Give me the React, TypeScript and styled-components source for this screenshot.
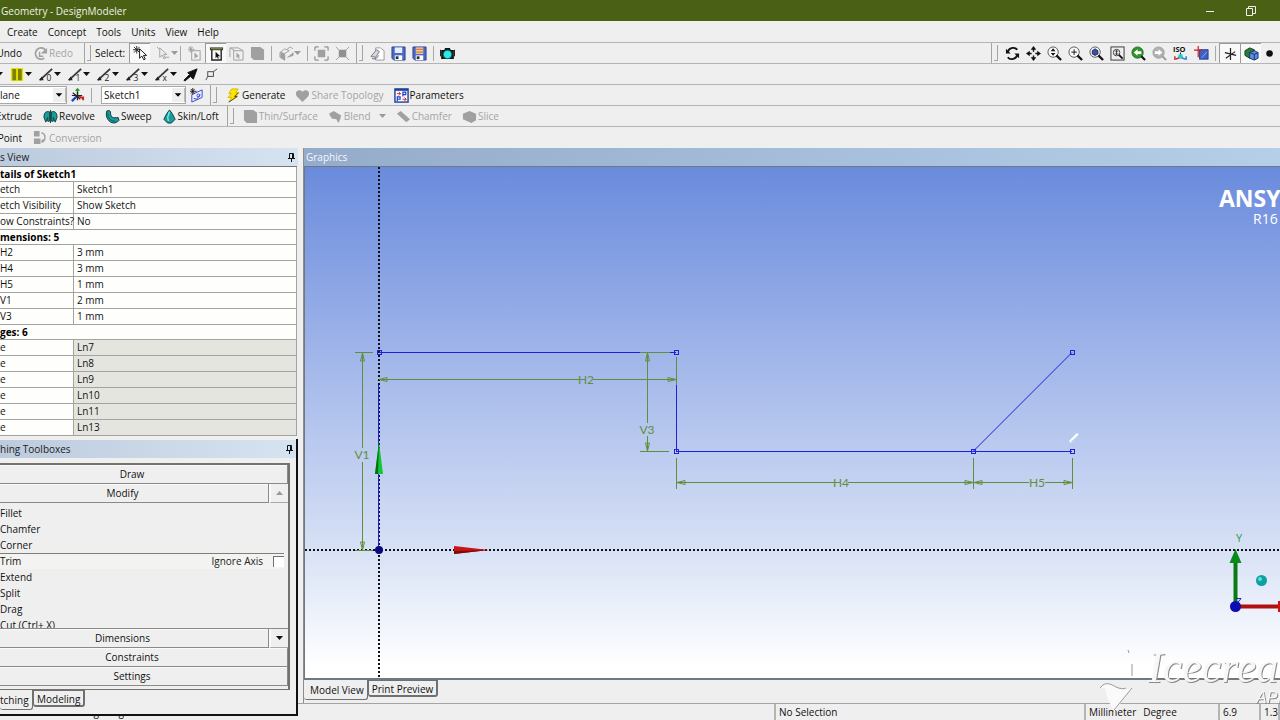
import React from "react";
import styled, { createGlobalStyle, css } from "styled-components";

const GlobalStyle = createGlobalStyle`
  * { box-sizing: border-box; }
  body { margin: 0; background: #efefef; overflow: hidden; }
  button, select, input { font: inherit; color: inherit; margin: 0; padding: 0; border: 0; background: none; border-radius: 0; }
`;

const Window = styled.div`
  min-height: 100vh;
  display: flex;
  flex-direction: column;
  overflow: hidden;
  background: #efefef;
  color: #111;
  font: 10px/16px "Open Sans", "Noto Sans", sans-serif;
  white-space: nowrap;
`;

/* ---------- title bar and menu ---------- */
const TitleBar = styled.header`
  height: 21px;
  display: flex;
  align-items: center;
  background: #4a6015;
  color: #eef0e4;
`;
const Title = styled.h1`
  flex: 1;
  margin: 0;
  padding-left: 1px;
  font-size: 10px;
  font-weight: 400;
`;
const CaptionButton = styled.button`
  width: 41px;
  height: 21px;
  display: grid;
  place-items: center;
`;
const MenuBar = styled.nav`
  height: 22px;
  padding-left: 2px;
  display: flex;
  align-items: center;
  border-bottom: 1px solid #b4b4b4;
`;
const MenuItem = styled.button`
  height: 20px;
  padding: 0 5px;
`;

/* ---------- tool bars ---------- */
const Bar = styled.div<{ $plain?: boolean }>`
  height: 21px;
  display: flex;
  align-items: center;
  ${(p) => !p.$plain && css`border-bottom: 1px solid #b4b4b4;`}
`;
const Spring = styled.div`
  flex: 1;
`;
const Separator = styled.i`
  width: 1px;
  height: 15px;
  margin: 0 3px;
  background: #a8a8a8;
`;
const Grip = styled.i`
  width: 7px;
  height: 20px;
  margin: 0 4px 0 3px;
  flex: none;
  border-left: 1px solid #a4a4a4;
  display: flex;
  justify-content: flex-end;
  align-items: center;
  &::after {
    content: "";
    width: 3px;
    height: 15px;
    border: solid #a4a4a4;
    border-width: 0 1px 1px 0;
  }
`;
const Tool = styled.button<{ $wide?: boolean; $slim?: boolean; $on?: boolean }>`
  flex: none;
  width: ${(p) => (p.$wide ? 29 : p.$slim ? 19 : 21)}px;
  height: 20px;
  display: flex;
  align-items: center;
  justify-content: center;
  ${(p) => p.$on && css`
    background: #f9f9f9;
    border: solid #9a9a9a;
    border-width: 1px 0 0 1px;
  `}
`;
const LabelTool = styled.button<{ $off?: boolean }>`
  flex: none;
  height: 20px;
  padding: 0 5px;
  display: flex;
  align-items: center;
  gap: 1px;
  ${(p) => p.$off && css`color: #a4a4a4;`}
`;
const CutTool = styled.button<{ $width: number }>`
  width: ${(p) => p.$width}px;
  height: 20px;
  display: flex;
  justify-content: flex-end;
  overflow: hidden;
  align-items: center;
`;
const BarLabel = styled.span`
  padding-right: 4px;
`;
const Gap = styled.span<{ $small?: boolean }>`
  width: ${(p) => (p.$small ? 3 : 6)}px;
  flex: none;
`;
const Picker = styled.label<{ $width: number; $cut?: boolean }>`
  width: ${(p) => p.$width}px;
  height: 18px;
  display: flex;
  align-items: center;
  background: #fff;
  border: 1px solid #a8a8a8;
  ${(p) => p.$cut && css`border-left: 0;`}
  select {
    flex: 1;
    min-width: 0;
    height: 16px;
    padding-left: ${(p) => (p.$cut ? 0 : 2)}px;
    appearance: none;
    outline: 0;
  }
  svg {
    width: 13px;
    height: 14px;
    background: #efefef;
    border-right: 1px solid #bbb;
    pointer-events: none;
  }
`;
const Glyph = styled.svg`
  width: 15px;
  height: 15px;
  flex: none;
  fill: none;
  stroke: currentColor;
`;
const CaretGlyph = styled.svg<{ $off?: boolean }>`
  width: 7px;
  height: 5px;
  flex: none;
  fill: ${(p) => (p.$off ? "#9a9a9a" : "#111")};
`;
const Caret = ({ off }: { off?: boolean }) => (
  <CaretGlyph $off={off} viewBox="0 0 7 5"><path d="M0 0h7L3.500 4z" /></CaretGlyph>
);

const teal = "#1a9c9c";
const gray = "#a0a0a0";
const pointer = "M0 0v10l2.500-2.300 2 4 1.600-.8-1.900-3.900H7.500z";

const lens = (inner: React.ReactNode) => (
  <>
    <circle cx="6.500" cy="6.500" r="5.500" fill="#fafafa" stroke="#555" />
    <path d="M10 10l5 5" stroke="#111" strokeWidth="2.400" />
    {inner}
  </>
);
const penLine = (mark: string) => (
  <>
    <path d="M1 14L14 2" stroke="#3a3a3a" strokeWidth="2" />
    <path d="M0 14l5 0-2-4z" fill="#222" stroke="none" />
    <text x="8" y="15" fontSize="9" fill="#222" stroke="none">{mark}</text>
  </>
);

const icons: Record<string, React.ReactNode> = {
  redo: (
    <>
      <path d="M12 13A6 6 0 1 1 13 4" stroke={gray} strokeWidth="1.800" />
      <path d="M8 8h7V2z" fill={gray} stroke="none" />
      <path d="M7 6v5h4" stroke={gray} strokeWidth="1.500" />
    </>
  ),
  select: (
    <>
      <path d="M4 0v8M0 4h8M1 1l6 6M7 1L1 7" stroke="#222" />
      <g transform="translate(7 3)"><path d={pointer} fill="#fff" stroke="#111" /></g>
    </>
  ),
  selectMode: (
    <>
      <g transform="translate(4 2)"><path d={pointer} fill="#eee" stroke={gray} /></g>
      <path d="M1 1l2 2M10 12h4" stroke={gray} />
    </>
  ),
  points: (
    <>
      <rect x="5" y="5" width="9" height="10" stroke={gray} />
      <path d="M4 0v7M1 3.500h7M2 1l4 5M6 1L2 6" stroke={gray} />
      <path d="M8 7v6l4-2z" fill={gray} stroke="none" />
    </>
  ),
  edges: (
    <>
      <path d="M1 3h14" stroke="#333820" strokeWidth="3" />
      <path d="M2 3h12" stroke="#a0ad58" />
      <path d="M3 4v11h10V4" stroke="#222" strokeWidth="1.500" />
      <path d="M7 6v7l1.500-1.500 1 2 1-.5-1-2H12z" fill="#111" stroke="none" />
    </>
  ),
  faces: (
    <>
      <path d="M1 12V2h9l5 3v10H5V4L1 2M5 5h10" stroke={gray} />
      <path d="M8 7v6l1.500-1.500 1 2 1-.5-1-2H12z" fill={gray} stroke="none" />
    </>
  ),
  body: <path d="M1 1h10l4 3v11H4l-3-3z" fill={gray} stroke="none" />,
  extend: (
    <>
      <path d="M1 7l5-4 5 2-5 3zM1 7v5l5 3V8" stroke={gray} fill="#eee" />
      <path d="M2 7v5l4 3v-6zM9 12l6-2v-3" stroke={gray} fill={gray} />
      <path d="M8 4l4-3 3 2" stroke={gray} />
    </>
  ),
  expand: (
    <>
      <rect x="4" y="4" width="8" height="8" fill={gray} stroke="none" />
      <path d="M1 5V1h4M11 1h4v4M15 11v4h-4M5 15H1v-4" stroke="#777" />
    </>
  ),
  shrink: (
    <>
      <rect x="4" y="4" width="8" height="8" fill="#909090" stroke="none" />
      <path d="M1 1l4 4M15 1l-4 4M15 15l-4-4M1 15l4-4" stroke={gray} />
    </>
  ),
  sheet: (
    <>
      <path d="M6 2h5l4 3v10H6z" fill="#fff" stroke="#999" />
      <path d="M1 11l6-7 3 2-4 6z" fill="#d5d5e5" stroke="#777" />
      <path d="M2 13c3 2 6 0 7-3" stroke="#667" />
    </>
  ),
  save: (
    <>
      <path d="M1 1h14v14H3l-2-2z" fill="#4a68c4" stroke="#2c4494" />
      <path d="M4 1.500h8v6H4z" fill="#e6edfa" stroke="none" />
      <path d="M4 10h8v5H4z" fill="#fff" stroke="none" />
      <path d="M5 11h3v3H5z" fill="#234" stroke="none" />
    </>
  ),
  saveAs: (
    <>
      <path d="M1 1h14v14H3l-2-2z" fill="#4a68c4" stroke="#2c4494" />
      <path d="M4 1.500h8v7H4z" fill="#f4c9a0" stroke="none" />
      <path d="M4 3.500h8M4 6.500h8" stroke="#c06a30" />
      <path d="M4 10h8v5H4z" fill="#fff" stroke="none" />
      <path d="M5 11h3v3H5z" fill="#234" stroke="none" />
    </>
  ),
  camera: (
    <>
      <path d="M2 5h3l1-2h4l1 2h3v8H2z" fill="#233" stroke="#111" strokeWidth="1.500" />
      <path d="M.500 4v7M15.500 4v7" stroke="#111" />
      <circle cx="8" cy="9" r="4.500" fill="#2ee8e8" stroke="#066" />
    </>
  ),
  rotate: (
    <>
      <path d="M3 6c2-5 8-5 10-2M13 10c-2 5-8 5-10 2" stroke="#111" strokeWidth="2" />
      <path d="M1 3v5h5zM15 13V8h-5z" fill="#111" stroke="none" />
    </>
  ),
  pan: (
    <>
      <path d="M8 3v3M8 10v3M3 8h3M10 8h3" stroke="#111" strokeWidth="1.500" />
      <path d="M8 0l3 4H5zM8 16l3-4H5zM0 8l4-3v6zM16 8l-4-3v6z" fill="#111" stroke="none" />
    </>
  ),
  zoom: lens(<path d="M6.500 2.500L9 5.500H4zM6.500 10.500L9 7.500H4z" fill="#111" stroke="none" />),
  zoomIn: lens(<path d="M6.500 3.500v6M3.500 6.500h6" stroke="#111" />),
  zoomFit: lens(<path d="M3.500 5l3-2 3 2v3.500l-3 1.500-3-1.500z" fill="#3c50a0" stroke="#1a2766" />),
  zoomBox: (
    <>
      <rect x="1" y="1" width="14" height="14" stroke="#333" />
      <circle cx="7" cy="7" r="3.500" stroke="#444" />
      <path d="M9.500 9.500l4 4" stroke="#111" strokeWidth="2" />
      <path d="M7 5v4M5.500 6L7 4.500 8.500 6M5.500 8L7 9.500 8.500 8" stroke="#222" />
    </>
  ),
  zoomPrev: (
    <>
      <circle cx="7" cy="7" r="6" fill="#2f9430" stroke="#226a22" />
      <path d="M11 11l4 4" stroke="#111" strokeWidth="2.200" />
      <path d="M3 7l4-3.500v2h4v3H7v2z" fill="#fff" stroke="none" />
    </>
  ),
  zoomNext: (
    <>
      <circle cx="7" cy="7" r="6" fill="#b0b0b0" stroke={gray} />
      <path d="M11 11l4 4" stroke={gray} strokeWidth="2.200" />
      <path d="M11 7L7 3.500v2H3v3h4v2z" fill="#fff" stroke="none" />
    </>
  ),
  iso: (
    <>
      <text x="0" y="6" fontSize="8" fontWeight="700" fill="#111" stroke="none">ISO</text>
      <path d="M8 7v5" stroke="#111" />
      <path d="M8 12l-5 2M2 11v4" stroke="#c22" strokeWidth="1.500" />
      <path d="M8 12l5 2M14 11v4" stroke="#27c" strokeWidth="1.500" />
      <circle cx="8" cy="11" r="2.500" fill="#2cc" stroke="none" />
    </>
  ),
  lookAt: (
    <>
      <rect x="6" y="4" width="9" height="10" fill="#3f62c4" stroke="#203a88" />
      <path d="M8 13l6-7" stroke="#88a4ee" />
      <path d="M4.500 0v12M0 4.500h9" stroke="#c22" strokeWidth="1.300" />
    </>
  ),
  axes: <path d="M8 2v13M2 7l12 3M3 13l10-7" stroke="#222" strokeWidth="1.300" />,
  model: (
    <>
      <path d="M1 5l5-3 5 2v6l-5 3-5-3z" fill="#2a7a38" stroke="#153e1c" />
      <path d="M6 7l5-2 4 2v6l-4 2-5-2z" fill="#5a8fe0" stroke="#1b2f66" />
      <path d="M6 7l5 2 4-2M11 9v6" stroke="#1b2f66" />
    </>
  ),
  dot: <circle cx="7" cy="8" r="3.500" fill="#111" stroke="none" />,
  color: (
    <>
      <rect x="1" y="1" width="13" height="14" fill="#e4e400" stroke="none" />
      <path d="M4.500 2v12M10.500 2v12" stroke="#808000" strokeWidth="4" />
    </>
  ),
  edge0: penLine("0"),
  edge1: penLine("1"),
  edge2: penLine("2"),
  edge3: penLine("3"),
  edgeX: penLine("x"),
  arrow: <path d="M15 2L5 6l2 2-6 6 1 1 6-5 3 3z" fill="#111" stroke="#111" />,
  corner: (
    <>
      <rect x="4" y="5" width="6" height="5" stroke="#444" />
      <path d="M2 14l2-4M10 5l4-3" stroke="#444" />
    </>
  ),
  plane: (
    <>
      <path d="M8 8V1M6 3l2-2 2 2" stroke="#1a9c2a" strokeWidth="1.500" />
      <path d="M8 8l6 3M14 9v4" stroke="#c22" strokeWidth="2" />
      <path d="M2 14l6-6" stroke="#24c" strokeWidth="2.500" />
      <path d="M3 5l8 7M2 8h11M8 4v9" stroke="#222" strokeWidth="1.300" />
    </>
  ),
  sketch: (
    <>
      <path d="M3 7l11-5v8L3 15z" fill="#eef" stroke="#34c" />
      <path d="M5 11l3 1 4-5" stroke="#34c" />
      <circle cx="10" cy="8" r="1.500" stroke="#34c" />
      <path d="M4 0v7M1 3.500h7M2 1l4 5M6 1L2 6" stroke="#222" />
    </>
  ),
  bolt: (
    <>
      <path d="M6 1h7l-3 4h4l-4 4h2L3 15l3-5H2l4-4H3z" fill="#ffe600" stroke="#d8b800" />
      <path d="M13 5L9 9h3L3 15" stroke="#554a00" />
    </>
  ),
  heart: <path d="M8 15L2 9C-1 5 3 0 8 4c5-4 9 1 6 5z" fill={gray} stroke="none" />,
  params: (
    <>
      <rect x="1" y="1" width="14" height="14" fill="#fff" stroke="#1b3f9c" strokeWidth="1.500" />
      <path d="M1 2h14" stroke="#1b3f9c" strokeWidth="2" />
      <path d="M3 6h4M5 4l2 2-2 2M9 12h4M11 10l2 2-2 2" stroke="#c22" />
      <path d="M9.500 9V4.500h3v2.500h-3M3.500 14V9.500h3V12h-3" stroke="#1b3fcc" strokeWidth="1.300" />
    </>
  ),
  revolve: (
    <>
      <path d="M1 9c0-8 5-6 6-6v10H5V9L3 14z" fill={teal} stroke="#0b4444" />
      <path d="M15 9c0-8-5-6-6-6v10h2V9l2 5z" fill={teal} stroke="#0b4444" />
      <path d="M8 1v14" stroke="#0b4444" />
    </>
  ),
  sweep: (
    <>
      <path d="M2 2c3-1 4 0 4 3 0 4 3 5 8 4l1 3c-3 4-9 4-12-1C1 8 1 5 2 2z" fill={teal} stroke="#0b3a3a" />
      <path d="M3 4c0 6 3 9 8 9" stroke="#0b5a5a" />
    </>
  ),
  loft: (
    <>
      <path d="M8 1l3 4 3 6-4 4H6l-4-4 3-6z" fill={teal} stroke="#0b3a3a" />
      <path d="M8 3L6 9l1 4" stroke="#7fe6e6" strokeWidth="1.500" />
    </>
  ),
  blend: <path d="M1 5l5-3 8 5-1 4-2 4-2-4-5-1z" fill={gray} stroke="none" />,
  chamfer: <path d="M1 5l4-3 10 9-4 3z" fill={gray} stroke="none" />,
  slice: <path d="M1 5l7-3 7 3v7l-5 3-9-4z" fill={gray} stroke="none" />,
  convert: (
    <>
      <path d="M1 1h6v6H1zM1 9h7v6H1z" fill={gray} stroke="none" />
      <path d="M9 3c5 1 5 9 0 10M11 10l-2 3" stroke={gray} strokeWidth="1.500" />
    </>
  ),
};
const Icon = ({ name }: { name: string }) => (
  <Glyph viewBox="0 0 16 16" aria-hidden="true">{icons[name]}</Glyph>
);

/* ---------- work area ---------- */
const Work = styled.main`
  flex: 1;
  display: flex;
  min-height: 0;
`;
const Side = styled.aside`
  width: 298px;
  flex: none;
  display: flex;
  flex-direction: column;
  position: relative;
  z-index: 1;
  margin: 0 5px -13px 0;
`;
const PaneTitle = styled.h2<{ $active?: boolean }>`
  height: 18px;
  margin: 0;
  padding: 0 3px 0 ${(p) => (p.$active ? 2 : 0)}px;
  display: flex;
  flex: none;
  align-items: center;
  justify-content: space-between;
  font-size: 10px;
  font-weight: 400;
  color: ${(p) => (p.$active ? "#f4f8ff" : "#1c1c1c")};
  background: ${(p) =>
    p.$active ? "linear-gradient(90deg, #95abca, #b5cfe8)" : "linear-gradient(90deg, #bccbdd, #d6e3f1)"};
`;
const Pin = () => (
  <svg width="7" height="9" viewBox="0 0 7 9" fill="none" stroke="#111">
    <path d="M1.500 5V.5h4V5M0 5.500h7M3.500 6v3M4.500 1v4" />
  </svg>
);
const Details = styled.table`
  width: 297px;
  border-collapse: separate;
  border-spacing: 0;
  table-layout: fixed;
  background: #fefefd;
  border-top: 1px solid #777;
  th, td {
    height: 16px;
    padding: 0;
    line-height: 15px;
    text-align: left;
    font-weight: 400;
    border: solid #a3a3a0;
    border-width: 0 1px 1px 0;
  }
  td { padding-left: 3px; }
`;
const Section = styled.tr`
  && th { height: 15px; line-height: 14px; font-weight: 700; color: #000; }
`;
const Row = styled.tr<{ $locked?: boolean }>`
  td { ${(p) => p.$locked && css`background: #e5e5df;`} }
`;

const Toolbox = styled.section`
  flex: 1;
  margin-top: 3px;
  padding-top: 1px;
  display: flex;
  flex-direction: column;
  background: #efefef;
  border: solid #111;
  border-width: 0 2px 2px 0;
`;
const Drawers = styled.div`
  flex: 1;
  margin: 5px 6px 0 -23px;
  display: flex;
  flex-direction: column;
  border: solid #74746c;
  border-width: 2px 2px 1px 0;
  padding-bottom: 3px;
`;
const DrawerRow = styled.div`
  display: flex;
  height: 19px;
  flex: none;
`;
const Drawer = styled.button`
  flex: 1;
  height: 19px;
  border: solid #8a8a88;
  border-width: 0 1px 1px 0;
  box-shadow: inset 0 1px #fafafa;
`;
const Scroll = styled.button`
  width: 19px;
  display: grid;
  place-items: center;
  border-bottom: 1px solid #aaa;
  border-left: 2px solid #fafafa;
`;
const ToolList = styled.ul`
  flex: 1 1 0;
  margin: 0;
  padding: 2px 4px 0 23px;
  list-style: none;
  overflow: hidden;
  border-bottom: 1px solid #8a8a88;
`;
const ToolItem = styled.li<{ $on?: boolean }>`
  height: 16px;
  line-height: 15px;
  display: flex;
  justify-content: space-between;
  border-top: 1px solid ${(p) => (p.$on ? "#7f7f78" : "transparent")};
  ${(p) => p.$on && css`background: #f3f3f1;`}
`;
const Option = styled.label`
  display: flex;
  align-items: center;
  gap: 10px;
  color: #222;
  input {
    appearance: none;
    width: 11px;
    height: 11px;
    background: #fff;
    border: solid #707070;
    border-width: 1px 0 0 1px;
  }
`;
const Tabs = styled.div<{ $short?: boolean }>`
  display: flex;
  flex: none;
  align-items: flex-start;
  height: ${(p) => (p.$short ? 23 : 24)}px;
`;
const Tab = styled.button<{ $on?: boolean }>`
  height: ${(p) => (p.$on ? 20 : 17)}px;
  padding: 0 3px;
  background: #efefef;
  border: solid #707070;
  border-width: ${(p) => (p.$on ? "0 1px 1px 0" : "1px 2px 2px 1px")};
  border-radius: 0 0 3px 3px;
`;
const CutTab = styled(Tab)`
  width: 33px;
  padding: 0;
  text-align: left;
`;
const ViewTab = styled(Tab)`
  padding-left: ${(p) => (p.$on ? 6 : 3)}px;
`;

const View = styled.section`
  flex: 1;
  min-width: 0;
  display: flex;
  flex-direction: column;
  border-left: 1px solid #8d8d90;
`;
const Scene = styled.div`
  flex: 1;
  min-height: 0;
  position: relative;
  overflow: hidden;
  border: solid #707880;
  border-width: 1px 0 2px 1px;
  background: linear-gradient(#6a8bdd, #9fb4e9 36%, #d6e0f5 74%, #ffffff 98%);
`;
const Sketch = styled.svg`
  position: absolute;
  inset: 0;
  width: 100%;
  height: 100%;
`;
const Brand = styled.div`
  position: absolute;
  top: 18px;
  left: calc(100% - 61px);
  width: 90px;
  color: #fff;
  font: 700 23px/27px "Open Sans", sans-serif;
`;
const Release = styled.div`
  padding-left: 34px;
  font: 400 14px/13px "Open Sans", sans-serif;
`;
const Triad = styled.svg`
  position: absolute;
  right: 0;
  bottom: 60px;
  width: 56px;
  height: 90px;
`;

const StatusBar = styled.footer`
  height: 17px;
  flex: none;
  display: grid;
  grid-template-columns: 776fr 310fr 134px 41px 19px;
  border-top: 1px solid #a4a4a4;
`;
const Status = styled.span`
  padding-left: 3px;
  overflow: hidden;
  border-right: 2px solid #b4b4b4;
  display: flex;
  gap: 7px;
`;
const Watermark = styled.div`
  position: fixed;
  right: 0;
  bottom: 0;
  z-index: 2;
  width: 182px;
  height: 76px;
  overflow: hidden;
  pointer-events: none;
  color: #f7f7f7;
  text-shadow: 1px 1px 0 #8a8a8a;
  svg { position: absolute; left: 0; top: 6px; }
`;
const WatermarkName = styled.div`
  padding: 2px 0 0 50px;
  font: italic 400 44px/44px "Liberation Serif", serif;
`;
const WatermarkSub = styled.div`
  padding-left: 158px;
  font: italic 400 16px/16px "Liberation Sans", sans-serif;
`;

const green = "#5f8f3c";
const blue = "#2020d8";
const Arrowhead = ({ x, y, turn }: { x: number; y: number; turn: number }) => (
  <path d="M0 0l8-2v4z" transform={`translate(${x} ${y}) rotate(${turn})`} fill="none" stroke={green} />
);
const Dim = ({ x, y, children }: { x: number; y: number; children: string }) => (
  <text x={x} y={y} fontSize="12" fontFamily="Lato, sans-serif" fill={green} textAnchor="middle">{children}</text>
);
const nodes = [[74, 185], [371, 185], [371, 284], [668, 284], [767, 284], [767, 185]];

const Drawing = () => (
  <Sketch>
    <g stroke="#111" strokeWidth="2" strokeDasharray="2 2">
      <path d="M74 0V511" />
      <line x1="0" y1="383" x2="100%" y2="383" />
    </g>
    <g stroke={green} fill="none">
      <path d="M50 185.500h18M50 383.500h18M57.500 186v95M57.500 295v88" />
      <path d="M74 212.500h200M288 212.500h83M371.500 190v28" />
      <path d="M335 185.500h30M335 284.500h29M342.500 186v70M342.500 269v15" />
      <path d="M371.500 291v31M668.500 291v31M767.500 291v31" />
      <path d="M372 315.500h157M543 315.500h181M740 315.500h27" />
    </g>
    <g stroke={blue} fill="none">
      <path d="M74 185.500h261M365 185.500h6M371.500 218v66M371 284.500h396M668.500 284L767 185.500" />
      <path d="M73.500 218v165" />
      {nodes.map(([x, y]) => <rect key={`${x}-${y}`} x={x - 1.5} y={y - 1.5} width="4" height="4" />)}
    </g>
    <Arrowhead x={57.5} y={186} turn={90} />
    <Arrowhead x={57.5} y={383} turn={-90} />
    <Arrowhead x={342.5} y={186} turn={90} />
    <Arrowhead x={342.5} y={284} turn={-90} />
    <Arrowhead x={74} y={212.5} turn={0} />
    <Arrowhead x={371} y={212.5} turn={180} />
    <Arrowhead x={372} y={315.5} turn={0} />
    <Arrowhead x={668} y={315.5} turn={180} />
    <Arrowhead x={669} y={315.5} turn={0} />
    <Arrowhead x={767} y={315.5} turn={180} />
    <Dim x={57} y={292}>V1</Dim>
    <Dim x={281} y={217}>H2</Dim>
    <Dim x={342} y={267}>V3</Dim>
    <Dim x={536} y={320}>H4</Dim>
    <Dim x={732} y={320}>H5</Dim>
    <path d="M74 275l4 32h-8z" fill="#12c832" />
    <path d="M74 275l-1 32h-3z" fill="#0a6a1a" />
    <path d="M184 383l-35-4v8z" fill="#cc1414" />
    <path d="M184 383l-35 1v3z" fill="#7a0c0c" />
    <circle cx="74" cy="383" r="4" fill="#0a0a80" />
    <path d="M765 275l8-8" stroke="#fff" strokeWidth="3" />
    <path d="M766 275l8-7" stroke="#9fd0d0" />
  </Sketch>
);

const TriadAxes = () => (
  <Triad viewBox="0 0 56 90">
    <text x="12" y="14" fontSize="11" fill="#2c9c3c">Y</text>
    <path d="M11.500 30v48" stroke="#0a7a14" strokeWidth="4" />
    <path d="M11.500 21l6 14h-12z" fill="#0a8a18" />
    <path d="M12 78.500h42" stroke="#b01010" strokeWidth="4" />
    <path d="M54 73v11h2V73z" fill="#d01010" />
    <path d="M12 70.500h5l-4 5" stroke="#2020c0" fill="none" />
    <circle cx="11.500" cy="78.500" r="5.500" fill="#0c0cb4" />
    <circle cx="37.500" cy="52.500" r="5.500" fill="#10a0a0" />
    <circle cx="36" cy="51" r="2" fill="#5ce0e0" />
  </Triad>
);

const sections = [
  { head: "tails of Sketch1", rows: [["etch", "Sketch1"], ["etch Visibility", "Show Sketch"], ["ow Constraints?", "No"]] },
  { head: "mensions: 5", rows: [["H2", "3 mm"], ["H4", "3 mm"], ["H5", "1 mm"], ["V1", "2 mm"], ["V3", "1 mm"]] },
  { head: "ges: 6", locked: true, rows: ["Ln7", "Ln8", "Ln9", "Ln10", "Ln11", "Ln13"].map((n) => ["e", n]) },
];

export default function App() {
  return (
    <Window>
      <GlobalStyle />
      <TitleBar>
        <Title>Geometry - DesignModeler</Title>
        <CaptionButton aria-label="Minimize">
          <svg width="10" height="10"><path d="M1 5.500h8" stroke="#eee" /></svg>
        </CaptionButton>
        <CaptionButton aria-label="Restore">
          <svg width="10" height="10" fill="none" stroke="#eee"><path d="M.5 2.500h6v7h-6zM2.500 2V.5h7v7H7" /></svg>
        </CaptionButton>
        <Gap />
        <Gap $small />
      </TitleBar>
      <MenuBar>
        {["Create", "Concept", "Tools", "Units", "View", "Help"].map((m) => <MenuItem key={m}>{m}</MenuItem>)}
      </MenuBar>

      <Bar>
        <CutTool $width={22}>Undo</CutTool>
        <Gap />
        <LabelTool $off><Icon name="redo" />Redo</LabelTool>
        <Gap $small />
        <Grip />
        <BarLabel>Select:</BarLabel>
        <Tool $on aria-label="New selection"><Icon name="select" /></Tool>
        <Gap />
        <Tool aria-label="Select mode"><Icon name="selectMode" /><Caret off /></Tool>
        <Separator />
        <Tool aria-label="Points"><Icon name="points" /></Tool>
        <Tool $on aria-label="Edges"><Icon name="edges" /></Tool>
        <Tool aria-label="Faces"><Icon name="faces" /></Tool>
        <Tool aria-label="Bodies"><Icon name="body" /></Tool>
        <Separator />
        <Tool $wide aria-label="Extend selection"><Icon name="extend" /><Caret off /></Tool>
        <Separator />
        <Tool aria-label="Expand"><Icon name="expand" /></Tool>
        <Tool aria-label="Shrink"><Icon name="shrink" /></Tool>
        <Grip />
        <Tool aria-label="New"><Icon name="sheet" /></Tool>
        <Tool aria-label="Save"><Icon name="save" /></Tool>
        <Tool aria-label="Export"><Icon name="saveAs" /></Tool>
        <Separator />
        <Tool aria-label="Capture"><Icon name="camera" /></Tool>
        <Spring />
        <Grip />
        {["rotate", "pan", "zoom", "zoomIn", "zoomFit", "zoomBox", "zoomPrev", "zoomNext", "iso", "lookAt"].map((n) => (
          <Tool key={n} aria-label={n}><Icon name={n} /></Tool>
        ))}
        <Separator />
        <Tool $on aria-label="Axes"><Icon name="axes" /></Tool>
        <Tool $on aria-label="Model"><Icon name="model" /></Tool>
        <Tool $slim aria-label="Points display"><Icon name="dot" /></Tool>
      </Bar>

      <Bar>
        <CutTool $width={3} aria-label="More"><Caret /></CutTool>
        <Gap $small />
        {["color", "edge0", "edge1", "edge2", "edge3", "edgeX"].map((n) => (
          <Tool $wide key={n} aria-label={n}><Icon name={n} /><Caret /></Tool>
        ))}
        <Tool aria-label="Direction"><Icon name="arrow" /></Tool>
        <Tool aria-label="Vertices"><Icon name="corner" /></Tool>
      </Bar>

      <Bar>
        <Picker $width={67} $cut>
          <select aria-label="Plane"><option>lane</option></select>
          <svg viewBox="0 0 13 14"><path d="M3 5h7L6.500 9z" /></svg>
        </Picker>
        <Tool aria-label="New plane"><Icon name="plane" /></Tool>
        <Separator />
        <Gap />
        <Picker $width={85}>
          <select aria-label="Sketch"><option>Sketch1</option></select>
          <svg viewBox="0 0 13 14"><path d="M3 5h7L6.500 9z" /></svg>
        </Picker>
        <Tool aria-label="New sketch"><Icon name="sketch" /></Tool>
        <Grip />
        <LabelTool><Icon name="bolt" />Generate</LabelTool>
        <LabelTool $off><Icon name="heart" />Share Topology</LabelTool>
        <LabelTool><Icon name="params" />Parameters</LabelTool>
      </Bar>

      <Bar>
        <CutTool $width={32}>Extrude</CutTool>
        <Gap />
        <LabelTool><Icon name="revolve" />Revolve</LabelTool>
        <LabelTool><Icon name="sweep" />Sweep</LabelTool>
        <LabelTool><Icon name="loft" />Skin/Loft</LabelTool>
        <Grip />
        <LabelTool $off><Icon name="body" />Thin/Surface</LabelTool>
        <LabelTool $off><Icon name="blend" />Blend<Gap /><Caret off /></LabelTool>
        <LabelTool $off><Icon name="chamfer" />Chamfer</LabelTool>
        <LabelTool $off><Icon name="slice" />Slice</LabelTool>
      </Bar>

      <Bar $plain>
        <CutTool $width={22}>Point</CutTool>
        <Gap />
        <LabelTool $off><Icon name="convert" />Conversion</LabelTool>
      </Bar>

      <Work>
        <Side>
          <PaneTitle>s View<Pin /></PaneTitle>
          <Details>
            <colgroup><col width="74" /><col /></colgroup>
            <tbody>
              {sections.map((s) => (
                <React.Fragment key={s.head}>
                  <Section><th colSpan={2}>{s.head}</th></Section>
                  {s.rows.map(([k, v]) => (
                    <Row key={v + k} $locked={s.locked}><th scope="row">{k}</th><td>{v}</td></Row>
                  ))}
                </React.Fragment>
              ))}
            </tbody>
          </Details>

          <Toolbox>
            <PaneTitle>hing Toolboxes<Pin /></PaneTitle>
            <Drawers>
              <DrawerRow><Drawer>Draw</Drawer></DrawerRow>
              <DrawerRow>
                <Drawer>Modify</Drawer>
                <Scroll aria-label="Scroll up">
                  <svg width="7" height="4" fill="#999"><path d="M0 4h7L3.500 0z" /></svg>
                </Scroll>
              </DrawerRow>
              <ToolList>
                <ToolItem>Fillet</ToolItem>
                <ToolItem>Chamfer</ToolItem>
                <ToolItem>Corner</ToolItem>
                <ToolItem $on>Trim<Option>Ignore Axis<input type="checkbox" /></Option></ToolItem>
                <ToolItem>Extend</ToolItem>
                <ToolItem>Split</ToolItem>
                <ToolItem>Drag</ToolItem>
                <ToolItem>Cut (Ctrl+ X)</ToolItem>
              </ToolList>
              <DrawerRow>
                <Drawer>Dimensions</Drawer>
                <Scroll aria-label="Scroll down"><Caret /></Scroll>
              </DrawerRow>
              <DrawerRow><Drawer>Constraints</Drawer></DrawerRow>
              <DrawerRow><Drawer>Settings</Drawer></DrawerRow>
            </Drawers>
            <Tabs>
              <CutTab $on>tching</CutTab>
              <Tab>Modeling</Tab>
            </Tabs>
          </Toolbox>
        </Side>

        <View>
          <PaneTitle $active>Graphics</PaneTitle>
          <Scene>
            <Drawing />
            <Brand>ANSYS<Release>R16</Release></Brand>
            <TriadAxes />
          </Scene>
          <Tabs $short>
            <ViewTab $on>Model View</ViewTab>
            <ViewTab>Print Preview</ViewTab>
          </Tabs>
        </View>
      </Work>

      <StatusBar>
        <Status>Trim -- Select 2D edge/segment to trim</Status>
        <Status>No Selection</Status>
        <Status><span>Millimeter</span><span>Degree</span></Status>
        <Status>6.9</Status>
        <Status>1.3</Status>
      </StatusBar>

      <Watermark>
        <svg width="50" height="66" fill="#fafafa" stroke="#999">
          <path d="M2 38c8-8 12-2 18 0s10 2 14 0L16 62C12 54 8 46 7 38" stroke="none" />
          <path d="M2 38c6-8 12-3 16-1s8 2 10 1M34 38L16 60M30 0l1 3M34 14v12" fill="none" />
        </svg>
        <WatermarkName>Icecream</WatermarkName>
        <WatermarkSub>APPS</WatermarkSub>
      </Watermark>
    </Window>
  );
}
